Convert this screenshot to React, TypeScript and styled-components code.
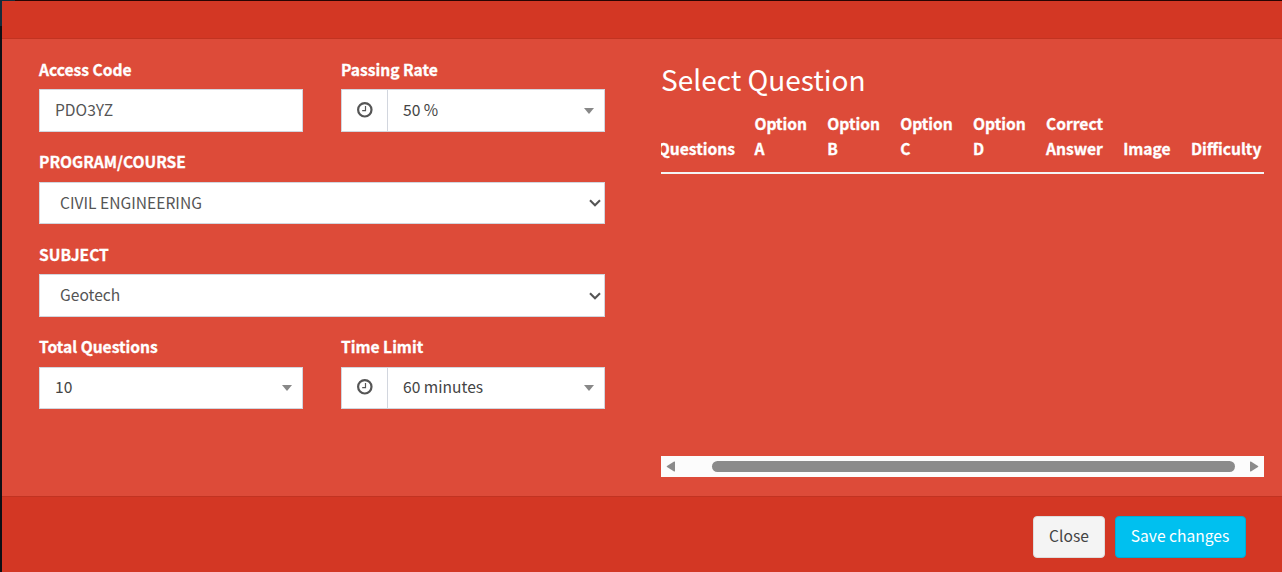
import React from "react";
import styled, { createGlobalStyle } from "styled-components";

const GlobalStyle = createGlobalStyle`
  * { box-sizing: border-box; }
  body {
    margin: 0;
    background: #0d0f14;
    font-family: "Noto Sans CJK JP", "Open Sans", sans-serif;
    font-size: 15.6px;
    line-height: 25px;
    color: #fff;
  }
`;

const Page = styled.div`
  height: 572px;
  padding: 1px 0 0 2px;
  overflow: hidden;
  background: linear-gradient(#152c3b, #152c3b) 0 0 / 2px 26px no-repeat,
    linear-gradient(90deg, #152c3b 15px, #280402 15px) 0 0 / 100% 1px no-repeat, #0d0f14;
`;

const Modal = styled.div`
  display: flex;
  flex-direction: column;
  height: 571px;
  background: #dd4b39;
`;

const Header = styled.header`
  height: 38px;
  flex: none;
  background: #d33724;
  border-bottom: 1px solid #c23321;
`;

const Body = styled.main`
  display: flex;
  justify-content: space-between;
  height: 457px;
  padding: 18.75px 18px 0 37px;
`;

const Footer = styled.footer`
  flex: 1;
  display: flex;
  justify-content: flex-end;
  gap: 10px;
  padding: 19px 36px 0 0;
  background: #d33724;
  border-top: 1px solid #c23321;
`;

const Form = styled.form`
  display: flex;
  flex-direction: column;
  width: 566px;
`;

const Row = styled.div`
  display: flex;
  gap: 38px;
  height: 92.5px;
`;

const Field = styled.div`
  flex: 1;
  min-width: 0;
`;

const Label = styled.div`
  font-weight: 700;
  -webkit-text-stroke: 0.3px currentColor;
  height: 25px;
  line-height: 23px;
  margin-bottom: 6.25px;
  white-space: nowrap;
`;

const Control = styled.div`
  display: flex;
  height: 42.5px;
  background: #fff;
  border: 1px solid #d2d6de;
  color: #555;
`;

const Addon = styled.div`
  display: flex;
  align-items: center;
  justify-content: center;
  width: 46px;
  padding-bottom: 1px;
  border-right: 1px solid #d2d6de;
`;

const Value = styled.div<{ $inset?: number; $dark?: boolean }>`
  flex: 1;
  display: flex;
  align-items: center;
  padding-left: ${(p) => p.$inset ?? 15}px;
  padding-bottom: ${(p) => (p.$dark ? 2 : 1)}px;
  color: ${(p) => (p.$dark ? "#444" : "#555")};
  white-space: nowrap;
`;

const Caret = styled.span`
  align-self: center;
  margin: 1px 10px 0 0;
  border: 5px solid transparent;
  border-top: 6px solid #888;
  border-bottom: 0;
`;

const Arrow = styled.svg`
  align-self: center;
  margin: 1px 3px 0 0;
`;

const Panel = styled.section`
  display: flex;
  flex-direction: column;
  width: 603px;
  height: 419.25px;
`;

const Title = styled.h3`
  margin: 3.25px 0 0;
  font-size: 28px;
  font-weight: 400;
  line-height: 36px;
`;

const TableArea = styled.div`
  flex: 1;
  padding-top: 15px;
  overflow: hidden;
`;

const HeadRow = styled.div`
  display: flex;
  align-items: flex-end;
  height: 62px;
  padding-bottom: 11px;
  border-bottom: 2px solid #f4f4f4;
  font-weight: 700;
  -webkit-text-stroke: 0.3px currentColor;
`;

const HeadCell = styled.div<{ $w: number; $end?: boolean }>`
  display: flex;
  flex: none;
  justify-content: ${(p) => (p.$end ? "flex-end" : "flex-start")};
  width: ${(p) => p.$w}px;
  white-space: pre;
`;

const ScrollBar = styled.div`
  display: flex;
  align-items: center;
  flex: none;
  height: 21px;
  padding: 0 5px;
  background: #fcfcfc;
`;

const Thumb = styled.div`
  width: 523px;
  height: 11px;
  margin: 0 15px 0 37px;
  border-radius: 6px;
  background: #8b8b8b;
`;

const Button = styled.button<{ $primary?: boolean }>`
  width: ${(p) => (p.$primary ? 131 : 72)}px;
  height: 42px;
  padding: 0 ${(p) => (p.$primary ? 1 : 0)}px 3px 0;
  font: inherit;
  white-space: nowrap;
  border-radius: 4px;
  color: ${(p) => (p.$primary ? "#fff" : "#444")};
  background: ${(p) => (p.$primary ? "#00c0ef" : "#f4f4f4")};
  border: 1px solid ${(p) => (p.$primary ? "#00acd6" : "#ddd")};
`;

const Clock = () => (
  <svg width="16" height="16" viewBox="0 0 16 16" fill="none" stroke="#555">
    <circle cx="7.8" cy="7.8" r="6.7" strokeWidth="2.2" />
    <path d="M8.5 4v4.7H5.2" strokeWidth="1.2" />
  </svg>
);

const Chevron = () => (
  <Arrow width="12" height="8" viewBox="0 0 12 8" fill="none" stroke="#555" strokeWidth="2.1">
    <path d="M1 1.2 6 6.2 11 1.2" />
  </Arrow>
);

const columns: { text: string; width: number }[] = [
  { text: "Option\nA", width: 72.9 },
  { text: "Option\nB", width: 72.9 },
  { text: "Option\nC", width: 72.9 },
  { text: "Option\nD", width: 72.9 },
  { text: "Correct\nAnswer", width: 77.2 },
  { text: "Image", width: 67.8 },
  { text: "Difficulty", width: 73 },
];

export default function App() {
  return (
    <>
      <GlobalStyle />
      <Page>
        <Modal>
          <Header />
          <Body>
            <Form>
              <Row>
                <Field>
                  <Label>Access Code</Label>
                  <Control>
                    <Value>PDO3YZ</Value>
                  </Control>
                </Field>
                <Field>
                  <Label>Passing Rate</Label>
                  <Control>
                    <Addon><Clock /></Addon>
                    <Value $dark>50 %</Value>
                    <Caret />
                  </Control>
                </Field>
              </Row>
              <Row>
                <Field>
                  <Label>PROGRAM/COURSE</Label>
                  <Control>
                    <Value $inset={20}>CIVIL ENGINEERING</Value>
                    <Chevron />
                  </Control>
                </Field>
              </Row>
              <Row>
                <Field>
                  <Label>SUBJECT</Label>
                  <Control>
                    <Value $inset={20}>Geotech</Value>
                    <Chevron />
                  </Control>
                </Field>
              </Row>
              <Row>
                <Field>
                  <Label>Total Questions</Label>
                  <Control>
                    <Value $dark>10</Value>
                    <Caret />
                  </Control>
                </Field>
                <Field>
                  <Label>Time Limit</Label>
                  <Control>
                    <Addon><Clock /></Addon>
                    <Value $dark>60 minutes</Value>
                    <Caret />
                  </Control>
                </Field>
              </Row>
            </Form>
            <Panel>
              <Title>Select Question</Title>
              <TableArea>
                <HeadRow>
                  <HeadCell $w={74} $end>Questions</HeadCell>
                  <HeadCell $w={19.4} />
                  {columns.map((c) => (
                    <HeadCell key={c.text} $w={c.width}>{c.text}</HeadCell>
                  ))}
                </HeadRow>
              </TableArea>
              <ScrollBar>
                <svg width="9" height="11" viewBox="0 0 9 12" preserveAspectRatio="none" fill="#8b8b8b">
                  <path d="M9 1v10q0 .8-.9.4L1 6.6Q.2 6 1 5.4L8.1.6Q9 .2 9 1z" />
                </svg>
                <Thumb />
                <svg width="9" height="11" viewBox="0 0 9 12" preserveAspectRatio="none" fill="#8b8b8b">
                  <path d="M0 1v10q0 .8.9.4L8 6.6Q8.8 6 8 5.4L.9.6Q0 .2 0 1z" />
                </svg>
              </ScrollBar>
            </Panel>
          </Body>
          <Footer>
            <Button type="button">Close</Button>
            <Button type="button" $primary>Save changes</Button>
          </Footer>
        </Modal>
      </Page>
    </>
  );
}
